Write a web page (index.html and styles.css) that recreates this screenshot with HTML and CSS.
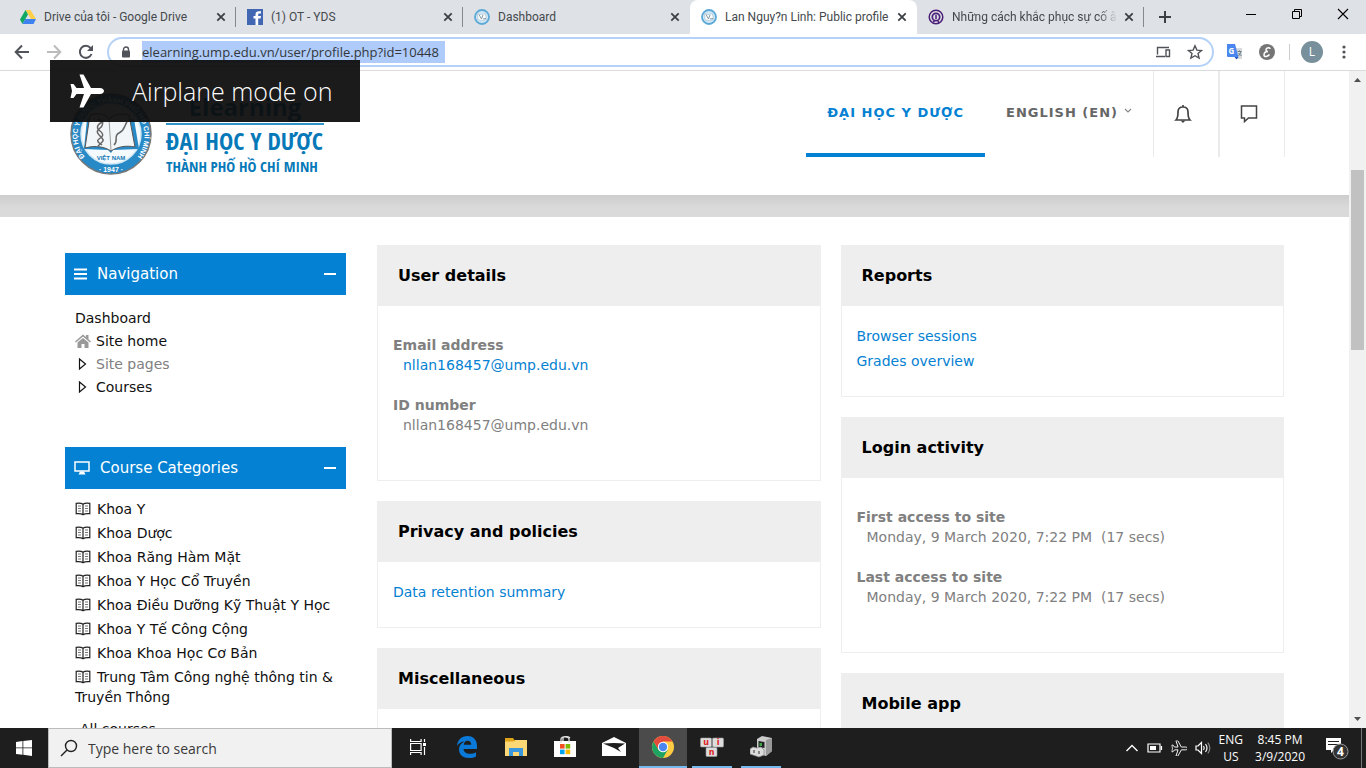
FILE: index.html
```html
<!DOCTYPE html>
<html lang="vi">
<head>
<meta charset="utf-8">
<title>Lan Nguy?n Linh: Public profile</title>
<link rel="stylesheet" href="styles.css">
</head>
<body>
<svg class="defs" aria-hidden="true">
  <symbol id="close" viewBox="0 0 10 10"><path d="M1.3 1.3l7.4 7.4M8.7 1.3L1.3 8.7" stroke="#3c4043" stroke-width="1.8" fill="none"/></symbol>
  <symbol id="ump" viewBox="0 0 16 16"><circle cx="8" cy="8" r="7" fill="#d3e7f4" stroke="#5ba9d6" stroke-width="1.8"/><path d="M3.500 4.500l4 1 4-1 1 6-4 1-4.500-.500z" fill="#fff" stroke="#b5cfde"/><path d="M5 5.500l2.500 4.500 1.500-4M9 10l3-.5" fill="none" stroke="#8398a5"/></symbol>
  <symbol id="book" viewBox="0 0 16 14"><path d="M8 2.200C6.500 1 3.500 1 1.200 1.300v10.400c2.500-.3 5-.2 6.800 1 1.800-1.200 4.300-1.300 6.800-1V1.300C12.500 1 9.500 1 8 2.200zM8 2.200v10.500" fill="none" stroke="#222" stroke-width="1.200"/><path d="M3 4h3M3 6.500h3M3 9h3M10 4h3M10 6.500h3M10 9h3" stroke="#777" stroke-width="1.100"/></symbol>
  <symbol id="plane" viewBox="0 0 34 34"><path d="M14 14L9.500 0.500h4L21 14h9c2.500 0 4 1.500 4 3s-1.500 3-4 3h-9l-7.500 13.500h-4L14 20H6.500L3.500 24H.5L2 17 .5 10h3l3 4z"/></symbol>
</svg>

<header class="browser">
  <div class="tabstrip">
    <div class="tab"><svg class="fav" viewBox="0 0 16 16"><path d="M5.500 1h5L16 10h-5z" fill="#ffcf48"/><path d="M5.500 1L0 10.500 2.500 15 8 5.500z" fill="#11a861"/><path d="M5.300 10H16l-2.500 5h-11z" fill="#3e82f1"/></svg><span class="tab-title">Drive của tôi - Google Drive</span><button class="x" aria-label="Close tab"><svg><use href="#close"/></svg></button></div>
    <div class="tab"><svg class="fav" viewBox="0 0 16 16"><rect width="16" height="16" fill="#4267b2"/><path d="M8.500 16V9.500H6.500V7h2V5.500C8.500 3.300 9.800 2.200 12 2.200h2v2.400h-1.500c-1 0-1.300.5-1.300 1.200V7H14l-.4 2.500h-2.400V16z" fill="#fff"/></svg><span class="tab-title">(1) OT - YDS</span><button class="x" aria-label="Close tab"><svg><use href="#close"/></svg></button></div>
    <div class="tab plain"><svg class="fav"><use href="#ump"/></svg><span class="tab-title">Dashboard</span><button class="x" aria-label="Close tab"><svg><use href="#close"/></svg></button></div>
    <div class="tab active"><svg class="fav"><use href="#ump"/></svg><span class="tab-title">Lan Nguy?n Linh: Public profile</span><button class="x" aria-label="Close tab"><svg><use href="#close"/></svg></button></div>
    <div class="tab"><svg class="fav" viewBox="0 0 16 16" fill="none" stroke="#4b1e78"><circle cx="8" cy="8" r="6.800" stroke-width="1.500"/><circle cx="8" cy="8" r="3.700" stroke-width="1.700"/><path d="M8 6v4M5 13l2-1.500M10 12l1 2" stroke-width="1.500"/></svg><span class="tab-title fade">Những cách khắc phục sự cố â</span><button class="x" aria-label="Close tab"><svg><use href="#close"/></svg></button></div>
    <button class="newtab" aria-label="New tab"><svg viewBox="0 0 14 14"><path d="M7 1v12M1 7h12" stroke="#3c4043" stroke-width="2"/></svg></button>
    <div class="winbtns">
      <button aria-label="Minimize"><svg viewBox="0 0 12 12"><path d="M1 6.500h10" stroke="#000"/></svg></button>
      <button aria-label="Restore"><svg viewBox="0 0 12 12"><path d="M1.500 3.500h7v7h-7zM3.500 3.500v-2h7v7h-2" fill="none" stroke="#000"/></svg></button>
      <button aria-label="Close"><svg viewBox="0 0 12 12"><path d="M1 1l10 10M11 1L1 11" stroke="#000" stroke-width="1.100"/></svg></button>
    </div>
  </div>
  <div class="toolbar">
    <button class="tool" aria-label="Back"><svg viewBox="0 0 16 16"><path d="M15 8H2M8 1.500L1.700 8 8 14.500" fill="none" stroke="#50545a" stroke-width="2"/></svg></button>
    <button class="tool" aria-label="Forward"><svg viewBox="0 0 16 16"><path d="M1 8h13M8 1.500L14.300 8 8 14.500" fill="none" stroke="#bbb" stroke-width="2"/></svg></button>
    <button class="tool" aria-label="Reload"><svg viewBox="0 0 16 16"><path d="M13.500 10A6 6 0 1 1 12.500 4" fill="none" stroke="#50545a" stroke-width="2"/><path d="M15 1v6H9z" fill="#50545a"/></svg></button>
    <div class="omnibox">
      <svg class="lock" viewBox="0 0 10 12"><path d="M2.500 5V3.500a2.500 2.500 0 0 1 5 0V5" fill="none" stroke="#50545a" stroke-width="1.400"/><rect x="1" y="4.500" width="8" height="7" rx="1" fill="#50545a"/></svg>
      <input class="url" aria-label="Address" value="elearning.ump.edu.vn/user/profile.php?id=10448">
      <span class="grow"></span>
      <svg class="i16" viewBox="0 0 16 16"><path d="M2.500 10.500V3.500H14M1 12.500h9M11 6h3.500v6.500H11z" fill="none" stroke="#50545a" stroke-width="1.400"/></svg>
      <svg class="i16" viewBox="0 0 16 16"><path d="M8 1.800l1.900 4.300 4.600.4-3.500 3 1.100 4.600L8 11.700 3.900 14.100 5 9.500l-3.500-3 4.600-.4z" fill="none" stroke="#50545a" stroke-width="1.400"/></svg>
    </div>
    <div class="exts">
      <svg class="i16" viewBox="0 0 16 16"><path d="M7 4h8v11H9z" fill="#d8dadc"/><path d="M0 0h8l3.500 13H1a1 1 0 0 1-1-1z" fill="#4a86ee"/><path d="M7.500 13h4l-2 2.500z" fill="#2050c0"/><text x="1.500" y="9.500" class="g-letter">G</text><path d="M10.500 7.500h4M12.500 6.500v1M14 8l-2.500 4M11.500 9l3 3" stroke="#667c89" fill="none"/></svg>
      <svg class="i16" viewBox="0 0 16 16"><circle cx="8" cy="8" r="8" fill="#757575"/><path d="M11 5c0-2-3.500-1.500-4 .5C6.700 7 8 7.500 9 7.500 6.500 7.500 5 9 5 11c0 2.500 4 1.500 5.500-.5" fill="none" stroke="#fff" stroke-width="1.500"/></svg>
      <span class="divider"></span>
      <button class="avatar">L</button>
      <button class="kebab" aria-label="Menu"><svg viewBox="0 0 4 16" fill="#50545a"><circle cx="2" cy="3" r="1.600"/><circle cx="2" cy="8" r="1.600"/><circle cx="2" cy="13" r="1.600"/></svg></button>
    </div>
  </div>
</header>

<div class="viewport">
  <div class="page">
    <div class="site-head">
      <a class="logo" href="#">
        <svg class="seal" viewBox="0 0 82 82">
          <defs><path id="arcname" d="M18.500 67.800A33.500 33.500 0 1 1 63.500 67.800"/></defs>
          <circle cx="41" cy="41" r="40" fill="#2889c7" stroke="#777" stroke-width="1.500"/>
          <circle cx="41" cy="41" r="30" fill="#f4fafe" stroke="#d2e8f4" stroke-width="1.500"/>
          <path d="M17 26l24 4 23-4 5 30-26 1-2 3-3-3-24-1z" fill="#2889c7"/>
          <path d="M20 22c8-3 15-1 19 4 6-5 13-6 20-4l6 32c-9-2-18 0-24 4-6-4-15-6-26-3z" fill="#f3f6f8" stroke="#555"/>
          <path d="M39 26l2 31" stroke="#999"/>
          <path d="M28 26c7 3 5 7 1 10s0 6 3 9-1 5-4 8M34 28c-6 3-9 6-4 10s2 6-1 8 0 4 3 6M44 52c5-5-1-9 5-12s5-7 8-11" fill="none" stroke="#666" stroke-width="1.500"/>
          <text class="ring-text"><textPath href="#arcname" startOffset="50%">ĐẠI HỌC Y DƯỢC THÀNH PHỐ HỒ CHÍ MINH</textPath></text>
          <text x="41" y="67" class="country">VIỆT NAM</text>
          <text x="41" y="79" class="year">· 1947 ·</text>
        </svg>
        <span class="logo-text"><span class="logo-top">Elearning</span><span class="logo-name">ĐẠI HỌC Y DƯỢC</span><span class="logo-city">THÀNH PHỐ HỒ CHÍ MINH</span></span>
      </a>
      <nav class="menu">
        <a class="menu-item current" href="#">ĐẠI HỌC Y DƯỢC</a>
        <a class="menu-item" href="#">ENGLISH (EN) <svg class="caret" viewBox="0 0 8 6"><path d="M1 1l3 3 3-3" fill="none" stroke="#888" stroke-width="1.200"/></svg></a>
        <button class="cell" aria-label="Notifications"><svg viewBox="0 0 18 20"><path d="M2 16c2-2 2-4 2-8 0-3 2-5 5-5s5 2 5 5c0 4 0 6 2 8zM9 1v2" fill="none" stroke="#444" stroke-width="1.700"/><path d="M6.500 16.500h5L9 19z" fill="#444"/></svg></button>
        <button class="cell" aria-label="Messages"><svg viewBox="0 0 18 20"><path d="M1.500 2h15v12H8.500L4.500 17.500V14h-3z" fill="none" stroke="#444" stroke-width="1.500"/></svg></button>
      </nav>
    </div>
    <div class="band"></div>
    <main class="content">
      <aside class="sidebar">
        <section>
          <h2 class="block-head"><svg class="bars" viewBox="0 0 13 12"><path d="M0 1.500h13M0 6h13M0 10.500h13" stroke="#fff" stroke-width="2"/></svg>Navigation<button aria-label="Collapse Navigation" class="fold"></button></h2>
          <ul class="tree">
            <li><a href="#">Dashboard</a></li>
            <li><svg class="home" viewBox="0 0 16 14"><path d="M0 7.500L8 .5l3 2.600V1h2.500v4.200L16 7.500l-1 1-7-6-7 6z" fill="#999"/><path d="M2.500 8.500L8 4l5.500 4.500V14h-4v-4h-3v4h-4z" fill="#999"/></svg><a href="#">Site home</a></li>
            <li class="muted"><svg class="tri" viewBox="0 0 16 14"><path d="M4.500 2l6 5-6 5z" fill="none" stroke="#111" stroke-width="1.200"/></svg><span>Site pages</span></li>
            <li><svg class="tri" viewBox="0 0 16 14"><path d="M4.500 2l6 5-6 5z" fill="none" stroke="#111" stroke-width="1.200"/></svg><a href="#">Courses</a></li>
          </ul>
        </section>
        <section>
          <h2 class="block-head"><svg class="screen" viewBox="0 0 16 14"><path d="M1 1h14v9H1z" fill="none" stroke="#fff" stroke-width="1.500"/><path d="M6 10.500h4l1.500 3h-7z" fill="#fff"/></svg>Course Categories<button aria-label="Collapse Course Categories" class="fold"></button></h2>
          <ul class="cats">
            <li><a href="#"><svg><use href="#book"/></svg>Khoa Y</a></li>
            <li><a href="#"><svg><use href="#book"/></svg>Khoa Dược</a></li>
            <li><a href="#"><svg><use href="#book"/></svg>Khoa Răng Hàm Mặt</a></li>
            <li><a href="#"><svg><use href="#book"/></svg>Khoa Y Học Cổ Truyền</a></li>
            <li><a href="#"><svg><use href="#book"/></svg>Khoa Điều Dưỡng Kỹ Thuật Y Học</a></li>
            <li><a href="#"><svg><use href="#book"/></svg>Khoa Y Tế Công Cộng</a></li>
            <li><a href="#"><svg><use href="#book"/></svg>Khoa Khoa Học Cơ Bản</a></li>
            <li><a href="#"><svg><use href="#book"/></svg>Trung Tâm Công nghệ thông tin &amp; Truyền Thông</a></li>
          </ul>
          <a class="all" href="#">All courses</a>
        </section>
      </aside>
      <div class="cards">
        <div class="column">
          <section class="card"><h3>User details</h3><div class="card-body"><dl><dt>Email address</dt><dd><a href="#">nllan168457@ump.edu.vn</a></dd><dt>ID number</dt><dd>nllan168457@ump.edu.vn</dd></dl></div></section>
          <section class="card"><h3>Privacy and policies</h3><div class="card-body"><ul><li><a href="#">Data retention summary</a></li></ul></div></section>
          <section class="card"><h3>Miscellaneous</h3><div class="card-body"></div></section>
        </div>
        <div class="column">
          <section class="card"><h3>Reports</h3><div class="card-body"><ul><li><a href="#">Browser sessions</a></li><li><a href="#">Grades overview</a></li></ul></div></section>
          <section class="card"><h3>Login activity</h3><div class="card-body"><dl><dt>First access to site</dt><dd>Monday, 9 March 2020, 7:22 PM&nbsp; (17 secs)</dd><dt>Last access to site</dt><dd>Monday, 9 March 2020, 7:22 PM&nbsp; (17 secs)</dd></dl></div></section>
          <section class="card"><h3>Mobile app</h3><div class="card-body"></div></section>
        </div>
      </div>
    </main>
  </div>
  <div class="scrollbar">
    <svg viewBox="0 0 17 17"><path d="M5 11l3.500-4 3.500 4z" fill="#505050"/></svg>
    <div class="track"><div class="thumb"></div></div>
    <svg viewBox="0 0 17 17"><path d="M5 6l3.500 4L12 6z" fill="#505050"/></svg>
  </div>
</div>

<div class="toast"><svg viewBox="0 0 34 34" fill="#fff"><use href="#plane"/></svg>Airplane mode on</div>

<footer class="taskbar">
  <button class="start" aria-label="Start"><svg viewBox="0 0 16 16" fill="#fff"><path d="M0 2l6.500-1v6.500H0zM7.300.9L16 0v7.500H7.300zM0 8.300h6.500v6.500L0 14zM7.300 8.300H16V16l-8.700-1.200z"/></svg></button>
  <label class="search"><svg viewBox="0 0 18 18"><circle cx="11" cy="7" r="5.500" fill="none" stroke="#222" stroke-width="1.400"/><path d="M7 11l-6 6" stroke="#222" stroke-width="1.400"/></svg><input type="text" placeholder="Type here to search" aria-label="Search"></label>
  <div class="apps">
    <button class="app" aria-label="Task view"><svg class="i16" viewBox="0 0 16 16" fill="none" stroke="#fff" stroke-width="1.200"><path d="M.6 4.500h10.500v7H.6zM.6 0v2.500h10.500V0M.6 16v-2.500h10.500V16M14.500 0v3M14.500 8v8"/><path d="M13 4h3v3h-3z" fill="#fff" stroke="none"/></svg></button>
    <button class="app" aria-label="Edge"><svg class="i22" viewBox="0 0 22 22"><path d="M1 10C1.500 4 5.500 0 11.500 0 18 0 21 4.500 21 10v3H7.500c.3 3.500 3.500 4.800 6.500 4.800 2.200 0 4.200-.6 6-1.600v4.300c-2 1-4.500 1.500-7 1.500C7 22 3 18.500 3 13.500 3 10 5 7 8.500 5.500 5.500 5.500 2.500 7.500 1 10zm6.800-1.200h7.400c0-2.500-1.200-4-3.600-4S8 6.500 7.800 8.800z" fill="#0a79d8"/></svg></button>
    <button class="app" aria-label="File Explorer"><svg class="i22" viewBox="0 0 22 22"><path d="M0 2h8l1.500 2H22v16H0z" fill="#e0a418"/><path d="M0 5.500h9L10.500 4H22v16H0z" fill="#fbd775"/><path d="M4 12h14v8h-4v-4H8v4H4z" fill="#3a96dd"/></svg></button>
    <button class="app" aria-label="Store"><svg class="i22" viewBox="0 0 22 22"><path d="M0 5h22v16H0z" fill="#fff"/><path d="M7 7V3c0-3 8-3 8 0v4M9 5V2c0-2 5-2 7 0" fill="none" stroke="#ddd" stroke-width="1.300"/><path d="M6 8h4.600v4.600H6z" fill="#f25022"/><path d="M11.600 8h4.600v4.600h-4.600z" fill="#7fba00"/><path d="M6 13.600h4.600v4.600H6z" fill="#00a4ef"/><path d="M11.600 13.600h4.600v4.600h-4.600z" fill="#ffb900"/></svg></button>
    <button class="app" aria-label="Mail"><svg class="i24" viewBox="0 0 24 22"><path d="M0 7l12-6 12 6v13H0z" fill="#fff"/><path d="M1 7.500L12 7l11 .5-7 4.500 3 4-7-4z" fill="#1e1e1e"/></svg></button>
    <button class="app on" aria-label="Chrome"><svg class="i22" viewBox="0 0 22 22"><circle cx="11" cy="11" r="11" fill="#fc4"/><path d="M1.500 5.500A11 11 0 0 1 20.500 5.500H11L6.200 13.800z" fill="#e34b3d"/><path d="M1.500 5.500A11 11 0 0 0 11 22l4.800-8.200L6.500 14z" fill="#1da262"/><circle cx="11" cy="11" r="5.200" fill="#fff"/><circle cx="11" cy="11" r="4.200" fill="#4a86ee"/></svg></button>
    <button class="app run" aria-label="UniKey"><svg class="i24" viewBox="0 0 24 22"><g fill="#ddd" stroke="#999" stroke-width=".6"><rect x=".5" y="2" width="11" height="9" rx="1"/><rect x="12.500" y="2" width="11" height="9" rx="1"/><rect x="6" y="11.500" width="11" height="9" rx="1"/></g><g class="keys"><text x="6" y="9">u</text><text x="18" y="9">i</text><text x="11.500" y="18.500">n</text></g></svg></button>
    <button class="app run" aria-label="Device utility"><svg class="i22" viewBox="0 0 22 22"><path d="M7 3l5-3 10 2v13l-6 5-9-3z" fill="#ccc"/><path d="M16 4l6-2v13l-6 5z" fill="#999"/><path d="M8.500 5l6 1v6l-6-1z" fill="#222"/><path d="M9.500 7h2.500v3H9.500z" fill="#39a845"/><path d="M0 13l3-2 4 1 4-1 3 3v5l-5 2-9-3z" fill="#ddd" stroke="#888" stroke-width=".7"/><path d="M3 14h2v3H3zM8 15h2v3H8z" fill="#888"/></svg></button>
  </div>
  <div class="tray">
    <svg class="i14" viewBox="0 0 14 14"><path d="M1.500 10L7 4.500l5.500 5.500" fill="none" stroke="#fff" stroke-width="1.400"/></svg>
    <svg class="i16" viewBox="0 0 16 16"><path d="M1 4h12v8H1zM14.500 6v4" fill="none" stroke="#fff" stroke-width="1.200"/><path d="M3 6h6v4H3z" fill="#fff"/></svg>
    <svg class="i16 outline" viewBox="-1 -1 36 36"><use href="#plane"/></svg>
    <svg class="i16" viewBox="0 0 16 16" fill="none" stroke="#fff" stroke-width="1.200"><path d="M1 6h2l3.500-3.500v11L3 10H1zM8.500 6q1.500 2 0 4M10.500 4q3 4 0 8"/><path d="M12.800 2.500q4 5.500 0 11" stroke="#888"/></svg>
    <span class="lines">ENG<br>US</span>
    <span class="lines clock">8:45 PM<br>3/9/2020</span>
    <button class="notes" aria-label="4 notifications"><svg viewBox="0 0 24 24"><path d="M1 2h15v12H9l-3 3v-3H1z" fill="#fff"/><path d="M3 5.500h11M3 8.500h11" stroke="#222" stroke-width="1.200"/><circle cx="15.500" cy="15.500" r="7.500" fill="#333" stroke="#999"/><text x="15.500" y="20">4</text></svg></button>
    <span class="peek"></span>
  </div>
</footer>
</body>
</html>
```

FILE: styles.css
```css
* { box-sizing: border-box; }
body { margin: 0; height: 100vh; display: flex; flex-direction: column; overflow: hidden; background: #fff; font: 14px/20px "DejaVu Sans", Verdana, sans-serif; color: #808080; }
a { color: #0481d2; text-decoration: none; }
button { border: 0; padding: 0; background: none; font: inherit; display: flex; align-items: center; justify-content: center; }
ul, dl, dd, h2, h3 { margin: 0; padding: 0; list-style: none; }
svg { flex: none; display: block; }
.defs { position: absolute; width: 0; height: 0; }
.grow { flex: 1; }
.i14 { width: 14px; height: 14px; }
.i16 { width: 16px; height: 16px; }
.i22 { width: 22px; height: 22px; }
.i24 { width: 24px; height: 22px; }

.browser { flex: none; font-family: "Open Sans", "Noto Sans", sans-serif; color: #45494d; border-bottom: 1px solid #d9dadc; }
.tabstrip { display: flex; height: 34px; background: #dee1e6; padding-left: 9px; }
.tab { flex: 0 1 227px; min-width: 0; display: flex; align-items: center; padding: 0 7px 0 11px; border-right: 1px solid #85888c; background: #dee1e6; border-image: linear-gradient(transparent 22%, #85888c 22%, #85888c 78%, transparent 78%) 1; border-width: 0 1px 0 0; }
.tab.plain { border-image: none; border-color: transparent; }
.tab.active { background: #fff; border-image: none; border-color: transparent; border-radius: 8px 8px 0 0; }
.fav { width: 16px; height: 16px; }
.tab-title { flex: 1; min-width: 0; margin-left: 8px; white-space: nowrap; overflow: hidden; font-family: Roboto, sans-serif; font-size: 12px; }
.tab-title.fade { mask-image: linear-gradient(to right, #000 88%, transparent); }
.x { width: 14px; height: 14px; margin-left: 4px; }
.x svg { width: 10px; height: 10px; }
.newtab { width: 42px; }
.newtab svg { width: 14px; height: 14px; }
.winbtns { display: flex; margin-left: auto; }
.winbtns button { width: 46px; height: 28px; }
.winbtns svg { width: 12px; height: 12px; }
.toolbar { display: flex; align-items: center; height: 36px; padding-left: 6px; }
.tool { width: 32px; height: 32px; }
.tool svg { width: 16px; height: 16px; }
.omnibox { flex: 1; display: flex; align-items: center; gap: 16px; height: 30px; margin-left: 5px; padding: 0 9px 0 12px; border: 2px solid #b4d2f7; border-radius: 15px; }
.lock { width: 10px; height: 12px; }
.url { field-sizing: content; min-width: 303px; height: 22px; margin-left: -5px; padding: 0; border: 0; background: #aecbfa; color: #33373b; font: 13px/22px "Open Sans", sans-serif; }
.exts { display: flex; align-items: center; padding: 0 20px 0 13px; gap: 16px; }
.g-letter { font: bold 8px "Open Sans", sans-serif; fill: #fff; }
.divider { width: 1px; height: 16px; margin: 0 -5px 0 -2px; background: #ccc; }
.avatar { width: 22px; height: 22px; border-radius: 50%; background: #78909c; color: #fff; font-size: 12px; }
.kebab { margin-left: 3px; }
.kebab svg { width: 4px; height: 16px; }

.viewport { flex: 1; min-height: 0; display: flex; }
.page { flex: 1; min-width: 0; overflow: hidden; }
.site-head { display: flex; justify-content: space-between; align-items: flex-start; height: 124px; padding: 0 64px 0 70px; }
.logo { display: flex; gap: 14px; padding-top: 22px; }
.seal { width: 82px; height: 82px; }
.ring-text, .country, .year { font: bold 7px "Liberation Sans", sans-serif; fill: #fff; text-anchor: middle; }
.country { font-size: 6px; fill: #1479b5; }
.logo-text { display: flex; flex-direction: column; width: 158px; color: #0779b8; font-family: "Liberation Sans Narrow", "Arial Narrow", "Open Sans Condensed", "DejaVu Sans Condensed", sans-serif; font-weight: bold; white-space: nowrap; }
.logo-top { font: bold 24px/28px "Open Sans", sans-serif; text-align: center; height: 32px; border-bottom: 2px solid #3295c8; }
.logo-name { font-size: 24px; line-height: 32px; }
.logo-city { font-size: 15px; line-height: 18px; }
.menu { display: flex; height: 86px; }
.menu-item { display: flex; align-items: center; padding: 2px 21px 0; border-bottom: 4px solid transparent; color: #666; font-size: 13px; font-weight: bold; letter-spacing: 1px; }
.menu-item.current { color: #0481d2; border-color: #0481d2; }
.caret { width: 8px; height: 6px; margin: 0 0 4px 6px; }
.cell { width: 66px; padding-right: 6px; border: solid #ebebeb; border-width: 0 1px; }
.cell svg { width: 18px; height: 20px; }
.band { height: 22px; background: linear-gradient(#cdcdcd, #dadada 60%); }
.content { display: flex; gap: 31px; padding: 28px 65px 0; }
.sidebar { flex: 0 0 281px; padding-top: 8px; }
.sidebar a { color: #111; }
.block-head { display: flex; align-items: center; height: 42px; padding: 0 10px 0 9px; background: #0481d2; color: #fff; font-size: 15px; font-weight: normal; }
.fold { width: 12px; height: 2px; margin-left: auto; background: #fff; }
.bars { width: 13px; height: 12px; margin-right: 10px; }
.screen { width: 16px; height: 14px; margin-right: 10px; }
.tree { padding: 11px 10px 49px; }
.tree li { display: flex; align-items: center; gap: 5px; height: 23px; }
.home, .tri { width: 16px; height: 14px; }
.cats { padding: 10px 5px 0 10px; }
.cats li { margin-bottom: 4px; }
.cats svg { display: inline-block; width: 16px; height: 14px; margin-right: 6px; vertical-align: -2px; }
.all { display: block; padding: 8px 15px; }
.cards { flex: 1; display: grid; grid-template-columns: 1fr 1fr; gap: 20px; }
.column { display: flex; flex-direction: column; gap: 20px; }
.card { border: 1px solid #eee; border-top: 0; }
.card h3 { height: 61px; padding: 0 20px; background: #eee; color: #000; font-size: 16px; line-height: 62px; }
.card-body { padding: 20px 15px 25px; }
.card li + li { margin-top: 5px; }
.card dl { padding: 9px 0 20px; }
.card dt { font-weight: bold; }
.card dd { padding-left: 10px; }
.card dd + dt { margin-top: 20px; }
.scrollbar { flex: none; width: 17px; display: flex; flex-direction: column; background: #f1f1f1; }
.scrollbar svg { width: 17px; height: 17px; }
.track { flex: 1; display: flex; flex-direction: column; align-items: center; padding-top: 82px; }
.thumb { width: 13px; height: 180px; background: #c1c1c1; }

.toast { position: absolute; left: 50px; top: 60px; width: 310px; height: 62px; display: flex; align-items: center; gap: 28px; padding-left: 20px; background: rgba(13, 13, 13, .94); color: #fff; font: 300 25px "Open Sans", sans-serif; white-space: nowrap; }
.toast svg { width: 34px; height: 34px; }

.taskbar { flex: none; display: flex; height: 40px; background: #1e1e1e; color: #fff; font-family: "Open Sans", sans-serif; }
.start { width: 48px; }
.start svg { width: 16px; height: 16px; }
.search { display: flex; align-items: center; gap: 10px; width: 344px; padding: 0 11px; background: #f1f1f1; border: 1px solid #bbb; }
.search svg { width: 18px; height: 18px; }
.search input { flex: 1; min-width: 0; border: 0; padding: 0; background: none; font: 14px "Open Sans", sans-serif; }
.search input::placeholder { color: #3a3a3a; }
.apps { display: flex; gap: 1px; padding-left: 2px; }
.app { width: 48px; border-bottom: 2px solid transparent; }
.app.on { background: #4b4b4b; border-color: #76b9ed; }
.app.run { background: linear-gradient(#76b9ed, #76b9ed) center bottom / 40px 2px no-repeat border-box; }
.keys { font: bold 8px "DejaVu Sans", sans-serif; fill: #d22; text-anchor: middle; }
.tray { display: flex; align-items: center; gap: 8px; margin-left: auto; font-size: 12px; }
.lines { line-height: 17px; text-align: center; font-size: 12px; }
.outline { fill: none; stroke: #fff; stroke-width: 2; }
.clock { margin-left: 4px; }
.notes { margin-left: 12px; }
.notes svg { width: 24px; height: 24px; }
.notes text { font: bold 12px "Open Sans", sans-serif; fill: #fff; text-anchor: middle; }
.peek { align-self: stretch; width: 5px; margin-left: 4px; border-left: 1px solid #777; }
```
